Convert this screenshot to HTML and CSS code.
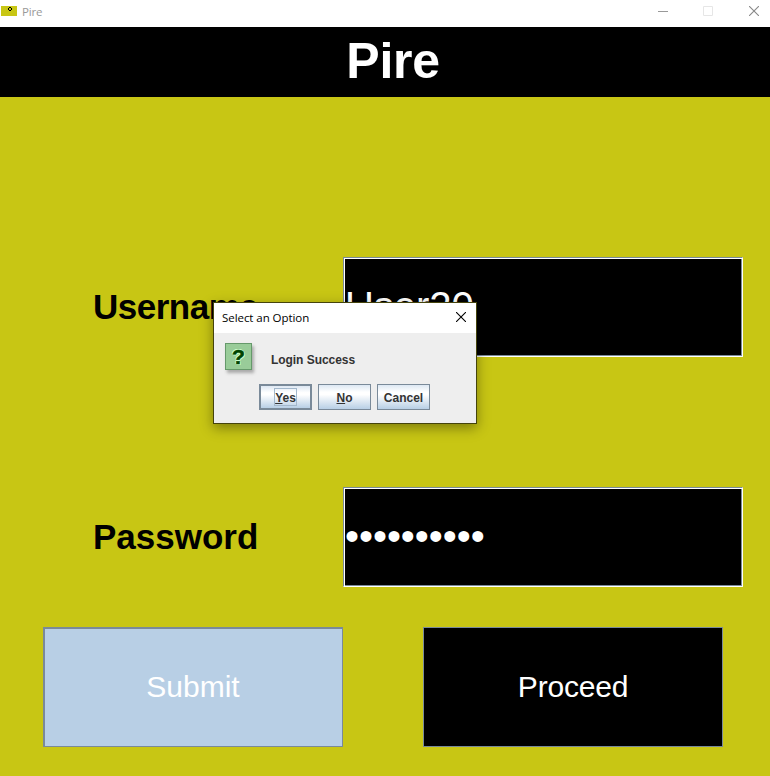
FILE: index.html
```html
<!DOCTYPE html>
<html lang="en">
<head>
<meta charset="utf-8">
<title>Pire</title>
<link rel="stylesheet" href="styles.css">
</head>
<body>
<div class="window">
  <div class="titlebar">
    <svg class="app-icon" width="16" height="10" viewBox="0 0 16 10" shape-rendering="crispEdges"><rect width="16" height="10" fill="#c8c614"/><path d="M8 1h2v1h1v2h-1v1H8V4H7V2h1z" fill="#000"/><rect x="8" y="2" width="2" height="2" fill="#c8c614"/></svg>
    <span class="app-name">Pire</span>
    <div class="controls">
      <svg width="10" height="10" viewBox="0 0 10 10"><path d="M0 5.5h10" stroke="#999"/></svg>
      <svg width="10" height="10" viewBox="0 0 10 10"><path d="M.5.5h9v9h-9z" fill="none" stroke="#e6e6e6"/></svg>
      <svg width="10" height="10" viewBox="0 0 10 10"><path d="M0 0l10 10M10 0L0 10" stroke="#888" stroke-width="1.1"/></svg>
    </div>
  </div>
  <h1 class="banner">Pire</h1>
  <div class="form">
    <div class="row"><label class="label username">Username</label><div class="field">User20</div></div>
    <div class="row"><label class="label">Password</label><div class="field">••••••••••</div></div>
    <div class="actions">
      <button class="action pressed">Submit</button>
      <button class="action">Proceed</button>
    </div>
  </div>
  <div class="dialog">
    <div class="dialog-title"><span>Select an Option</span>
      <svg width="10" height="10" viewBox="0 0 10 10"><path d="M0 0l10 10M10 0L0 10" stroke="#000" stroke-width="1.1"/></svg>
    </div>
    <div class="dialog-body">
      <div class="message"><div class="question">?</div><span>Login Success</span></div>
      <div class="options">
        <button class="option default"><span class="focus"><u>Y</u>es</span></button>
        <button class="option"><span><u>N</u>o</span></button>
        <button class="option"><span>Cancel</span></button>
      </div>
    </div>
  </div>
</div>
</body>
</html>
```
FILE: styles.css
```css
* { box-sizing: border-box; }
body { margin: 0; font-family: "Liberation Sans", Arial, sans-serif; }
.window { position: relative; width: 770px; height: 776px; background: #c8c614; overflow: hidden; }
.titlebar { display: flex; height: 27px; background: #fff; padding: 0 11px 0 1px; }
.app-icon { margin-top: 6px; }
.app-name { margin-left: 5px; font: 11.5px/24px "Open Sans", sans-serif; letter-spacing: -.2px; color: #999; }
.controls { display: flex; gap: 36px 35px; margin-left: auto; padding-top: 6px; }
.controls svg:last-child { margin-left: 1px; }
.banner { margin: 0; height: 70px; padding-left: 16px; background: #000; color: #fff; font-size: 50px; line-height: 68px; text-align: center; letter-spacing: -.3px; }
.form { padding-top: 160px; }
.row { display: flex; height: 100px; margin-bottom: 130px; padding-left: 93px; }
.row + .row { margin-bottom: 40px; }
.label { width: 250px; font-size: 35px; font-weight: bold; line-height: 100px; }
.username { letter-spacing: -.5px; }
.field { width: 400px; border: 1px solid; border-color: #7a8a99 #fff #fff #7a8a99; box-shadow: inset 1px 1px #fff, inset -1px -1px #7a8a99; background: #000; color: #fff; font-size: 40px; line-height: 97px; padding-left: 1px; letter-spacing: -.04px; }
.actions { display: flex; gap: 80px; padding-left: 43px; }
.action { width: 300px; height: 120px; padding: 0; border: 1px solid #7a8a99; background: #000; color: #fff; font: 30px "Liberation Sans", Arial, sans-serif; letter-spacing: -.2px; }
.pressed { background: #b8cfe5; box-shadow: inset 1px 1px #7a8a99; letter-spacing: 0; }
.dialog { position: absolute; left: 213px; top: 302px; width: 264px; height: 122px; border: 1px solid #45440c; background: #eee; box-shadow: 0 4px 12px rgba(0,0,0,.38); }
.dialog-title { display: flex; justify-content: space-between; height: 30px; padding: 0 10px 0 8px; background: #fff; font: 11.5px/30px "Open Sans", sans-serif; letter-spacing: -.06px; color: #000; }
.dialog-title svg { margin-top: 9px; }
.dialog-body { padding: 10px 11px; color: #333; font-size: 12px; font-weight: bold; }
.message { display: flex; height: 41px; gap: 19px; }
.message span { line-height: 34px; letter-spacing: -.05px; }
.question { width: 27px; height: 27px; border: 1px solid #66996b; background: #9c9; box-shadow: 2px 3px 3px #aaa; color: #004400; font-size: 21px; line-height: 25px; text-align: center; -webkit-text-stroke: .6px #004400; text-shadow: 1px 0 #cfc, -1px 0 #cfc, 0 1px #cfc, 0 -1px #cfc, 1px 1px #cfc, -1px -1px #cfc; }
.options { display: flex; gap: 6px; padding-left: 34px; }
.option { width: 53px; height: 26px; padding: 1px 0 0; border: 1px solid #7a8a99; background: linear-gradient(#dde8f3 0%, #fff 30%, #fff 40%, #b8cfe5 100%); color: #333; font: bold 12px/16px "Liberation Sans", Arial, sans-serif; }
.option.default { border-width: 2px; padding: 0; }
.focus { display: inline-block; height: 18px; border: 1px solid #a3b8cc; line-height: 18px; }
```
